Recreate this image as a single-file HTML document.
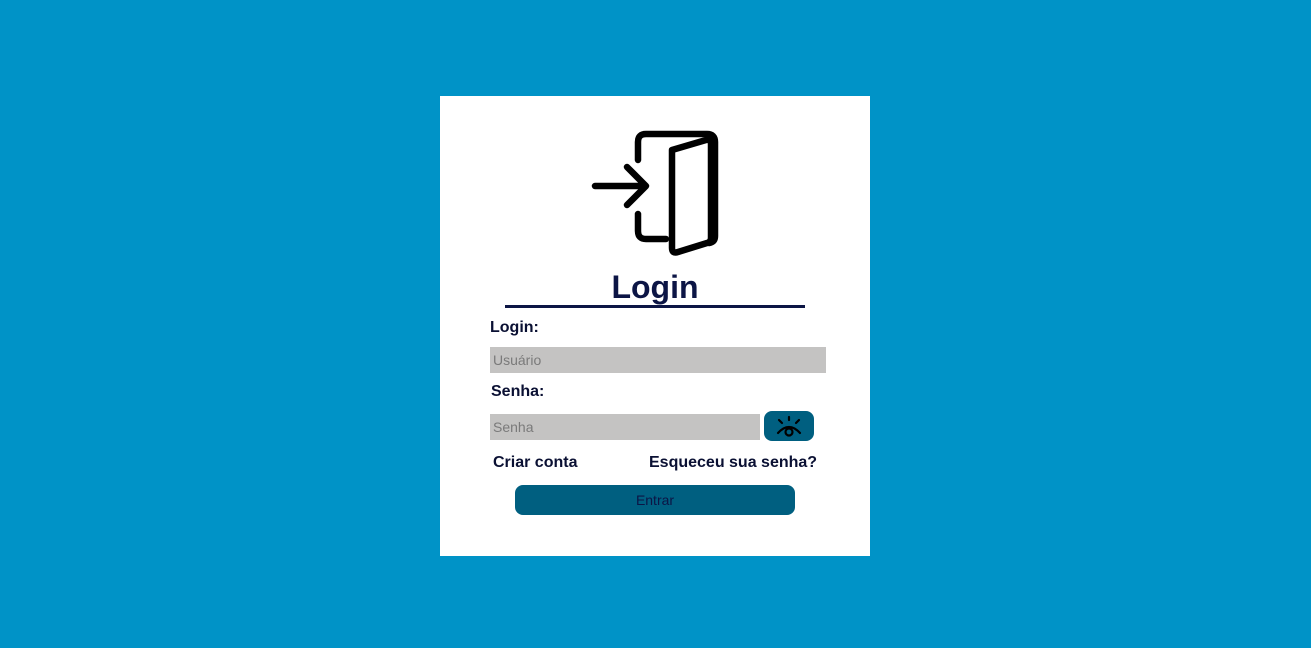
<!DOCTYPE html>
<html><head><meta charset="utf-8"><style>
body{margin:0;width:1311px;height:648px;background:#0093c7;font-family:"Liberation Sans",sans-serif;position:relative;overflow:hidden}
.card{position:absolute;left:440px;top:96px;width:430px;height:460px;background:#fff}
.a{position:absolute}
.lbl{font-weight:bold;font-size:16px;color:#0a1033}
.in{background:#c4c3c2;color:#7a7a7a;font-size:14px;line-height:26px;padding-left:3px;box-sizing:border-box}
</style></head><body>
<div class="card"></div>
<svg class="a" style="left:0;top:0" width="1311" height="648">
<g fill="none" stroke="#000" stroke-width="6.5" stroke-linecap="round" stroke-linejoin="round">
<path d="M638 160 V142 Q638 134 646 134 H707 Q715 134 715 142 V236 Q715 242 709 243"/>
<path d="M638 214 V231 Q638 239 646 239 H666"/>
<path d="M672 150 L706 140 Q711 139 711 144 V238 Q711 242 707 243 L678 252 Q672 254 672 248 Z"/>
<path d="M595 186 H646 M627 167 L646 186 L627 205"/>
</g></svg>
<div class="a" style="left:440px;width:430px;top:269px;text-align:center;font-size:32px;font-weight:bold;color:#0c1545">Login</div>
<div class="a" style="left:505px;top:305px;width:300px;height:3px;background:#0c1545"></div>
<div class="a lbl" style="left:490px;top:319px">Login:</div>
<div class="a in" style="left:490px;top:347px;width:336px;height:26px">Usuário</div>
<div class="a lbl" style="left:491px;top:383px">Senha:</div>
<div class="a in" style="left:490px;top:414px;width:270px;height:26px">Senha</div>
<div class="a" style="left:764px;top:411px;width:50px;height:30px;background:#005f80;border-radius:8px"></div>
<svg class="a" style="left:764px;top:411px" width="50" height="30"><g fill="none" stroke="#000" stroke-width="2.2" stroke-linecap="round"><path d="M14 22 Q25 10 36 22"/><circle cx="25" cy="21" r="3.5"/><path d="M25 6 V9 M15 9 L18 12 M35 9 L32 12"/></g></svg>
<div class="a lbl" style="left:493px;top:454px">Criar conta</div>
<div class="a lbl" style="left:649px;top:454px">Esqueceu sua senha?</div>
<div class="a" style="left:515px;top:485px;width:280px;height:30px;background:#005f80;border-radius:8px;text-align:center;line-height:30px;font-size:14px;color:#0c1545">Entrar</div>
</body></html>
